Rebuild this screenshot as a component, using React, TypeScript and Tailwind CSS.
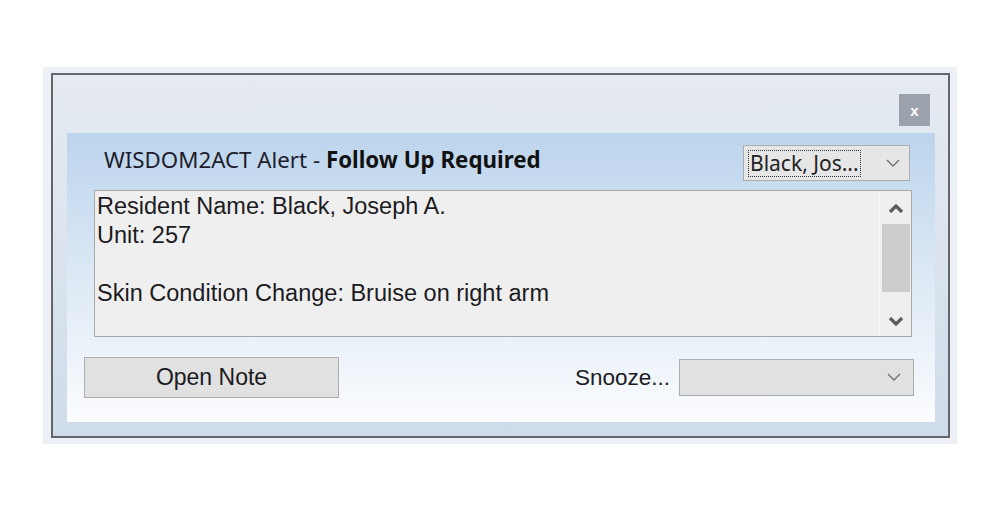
import React from "react";

const body = { fontFamily: '"Liberation Sans", Arial, sans-serif' };
const ui = { fontFamily: '"Noto Sans", "Open Sans", sans-serif' };

function Chevron({ up = false, className = "" }: { up?: boolean; className?: string }) {
  return (
    <svg width="14" height="9" viewBox="0 0 14 9" className={className}>
      <path
        d={up ? "M1 8 L7 2 L13 8" : "M1 1 L7 7 L13 1"}
        fill="none"
        stroke="currentColor"
        strokeWidth="1.4"
      />
    </svg>
  );
}

function ScrollArrow({ up = false }: { up?: boolean }) {
  return (
    <svg width="16" height="10" viewBox="0 0 16 10" className="text-[#5a5a5a]">
      <path
        d={up ? "M2 9 L8 3 L14 9" : "M2 1 L8 7 L14 1"}
        fill="none"
        stroke="currentColor"
        strokeWidth="3.2"
      />
    </svg>
  );
}

export default function App() {
  return (
    <div className="w-[1000px] h-[511px] bg-white pt-[67px] pl-[43px]">
      {/* pale outer frame */}
      <div className="w-[914px] h-[377px] bg-[#edf1f6] pt-[6px] pl-[8px]">
        {/* window */}
        <div className="w-[899px] h-[365px] border-2 border-[#62666c] bg-gradient-to-b from-[#e6ebf1] to-[#cfdcea] flex flex-col">
          <div className="h-[58px] flex justify-end items-start pt-[19px] pr-[18px]">
            <div
              className="w-[31px] h-[32px] bg-[#9ba2ab] text-white text-[15px] font-bold flex items-center justify-center leading-none"
              style={body}
            >
              x
            </div>
          </div>

          {/* inner panel */}
          <div className="ml-[14px] w-[868px] h-[289px] bg-gradient-to-b from-[#bcd4ed] via-[#dde9f5] to-[#fbfcfe] flex flex-col">
            {/* title row */}
            <div className="mt-[12px] h-[36px] flex items-center">
              <div className="ml-[37px] mb-[7px] text-[22.3px] text-[#1d1d2b] whitespace-nowrap" style={ui}>
                WISDOM2ACT Alert - <span className="font-bold text-[#111]">Follow Up Required</span>
              </div>
              <div className="ml-auto mr-[25px] w-[167px] h-[36px] bg-[#e6e6e6] border border-[#adadad] flex items-center pl-[4px] pr-[9px]">
                <span
                  className="border border-dotted border-[#333] px-[1px] h-[27px] flex items-center text-[21px] text-[#222] leading-none"
                  style={ui}
                >
                  Black, Jos...
                </span>
                <Chevron className="ml-auto text-[#707070]" />
              </div>
            </div>

            {/* message box */}
            <div className="mt-[9px] ml-[27px] w-[818px] h-[147px] border border-[#a9a9a9] bg-[#f0efef] flex">
              <div className="flex-1 pl-[2px] pt-[1px] text-[23.5px] leading-[29px] text-[#1b1b22]" style={body}>
                <div>Resident Name: Black, Joseph A.</div>
                <div>Unit: 257</div>
                <div>&nbsp;</div>
                <div>Skin Condition Change: Bruise on right arm</div>
              </div>
              <div className="w-[32px] border-l border-[#f8f8f8] flex flex-col items-center">
                <div className="h-[33px] flex items-center justify-center">
                  <ScrollArrow up />
                </div>
                <div className="w-[28px] h-[68px] bg-[#cdcdcd]" />
                <div className="flex-1 flex items-end justify-center pb-[9px]">
                  <ScrollArrow />
                </div>
              </div>
            </div>

            {/* bottom row */}
            <div className="mt-[20px] flex items-center">
              <div
                className="ml-[17px] w-[255px] h-[41px] bg-[#e1e1e1] border border-[#adadad] flex items-center justify-center text-[23px] text-[#1b1b22]"
                style={body}
              >
                Open Note
              </div>
              <div className="ml-auto text-[22.5px] text-[#1b1b22]" style={body}>
                Snooze...
              </div>
              <div className="ml-[9px] mr-[21px] w-[235px] h-[37px] bg-[#e1e1e1] border border-[#adadad] flex items-center justify-end pr-[12px]">
                <Chevron className="text-[#707070]" />
              </div>
            </div>
          </div>
        </div>
      </div>
    </div>
  );
}
